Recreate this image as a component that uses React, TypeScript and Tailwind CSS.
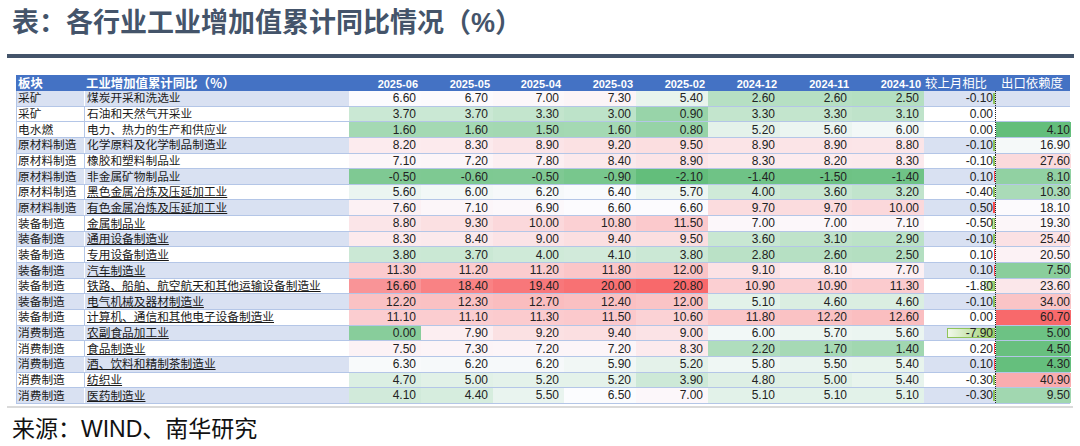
import React from 'react';

type Row = {
  sector: string;
  name: string;
  values: number[];
  mom: number;
  exportDep: number | null;
};

const dates = ['2025-06', '2025-05', '2025-04', '2025-03', '2025-02', '2024-12', '2024-11', '2024-10'];

const rows: Row[] = [
  { sector: '采矿', name: '煤炭开采和洗选业', values: [6.6, 6.7, 7.0, 7.3, 5.4, 2.6, 2.6, 2.5], mom: -0.1, exportDep: null },
  { sector: '采矿', name: '石油和天然气开采业', values: [3.7, 3.7, 3.3, 3.0, 0.9, 3.3, 3.3, 3.1], mom: 0.0, exportDep: null },
  { sector: '电水燃', name: '电力、热力的生产和供应业', values: [1.6, 1.6, 1.5, 1.6, 0.8, 5.2, 5.6, 6.0], mom: 0.0, exportDep: 4.1 },
  { sector: '原材料制造', name: '化学原料及化学制品制造业', values: [8.2, 8.3, 8.9, 9.2, 9.5, 8.9, 8.9, 8.8], mom: -0.1, exportDep: 16.9 },
  { sector: '原材料制造', name: '橡胶和塑料制品业', values: [7.1, 7.2, 7.8, 8.4, 8.9, 8.3, 8.2, 8.3], mom: -0.1, exportDep: 27.6 },
  { sector: '原材料制造', name: '非金属矿物制品业', values: [-0.5, -0.6, -0.5, -0.9, -2.1, -1.4, -1.5, -1.4], mom: 0.1, exportDep: 8.1 },
  { sector: '原材料制造', name: '黑色金属冶炼及压延加工业', values: [5.6, 6.0, 6.2, 6.4, 5.7, 4.0, 3.6, 3.2], mom: -0.4, exportDep: 10.3 },
  { sector: '原材料制造', name: '有色金属冶炼及压延加工业', values: [7.6, 7.1, 6.9, 6.6, 6.6, 9.7, 9.7, 10.0], mom: 0.5, exportDep: 18.1 },
  { sector: '装备制造', name: '金属制品业', values: [8.8, 9.3, 10.0, 10.8, 11.5, 7.0, 7.0, 7.1], mom: -0.5, exportDep: 19.3 },
  { sector: '装备制造', name: '通用设备制造业', values: [8.3, 8.4, 9.0, 9.4, 9.5, 3.6, 3.1, 2.9], mom: -0.1, exportDep: 25.4 },
  { sector: '装备制造', name: '专用设备制造业', values: [3.8, 3.7, 4.0, 4.1, 3.8, 2.8, 2.6, 2.5], mom: 0.1, exportDep: 20.5 },
  { sector: '装备制造', name: '汽车制造业', values: [11.3, 11.2, 11.2, 11.8, 12.0, 9.1, 8.1, 7.7], mom: 0.1, exportDep: 7.5 },
  { sector: '装备制造', name: '铁路、船舶、航空航天和其他运输设备制造业', values: [16.6, 18.4, 19.4, 20.0, 20.8, 10.9, 10.9, 11.3], mom: -1.8, exportDep: 23.6 },
  { sector: '装备制造', name: '电气机械及器材制造业', values: [12.2, 12.3, 12.7, 12.4, 12.0, 5.1, 4.6, 4.6], mom: -0.1, exportDep: 34.0 },
  { sector: '装备制造', name: '计算机、通信和其他电子设备制造业', values: [11.1, 11.1, 11.3, 11.5, 10.6, 11.8, 12.2, 12.6], mom: 0.0, exportDep: 60.7 },
  { sector: '消费制造', name: '农副食品加工业', values: [0.0, 7.9, 9.2, 9.4, 9.0, 6.0, 5.7, 5.6], mom: -7.9, exportDep: 5.0 },
  { sector: '消费制造', name: '食品制造业', values: [7.5, 7.3, 7.2, 7.2, 8.3, 2.2, 1.7, 1.4], mom: 0.2, exportDep: 4.5 },
  { sector: '消费制造', name: '酒、饮料和精制茶制造业', values: [6.3, 6.2, 6.2, 5.9, 5.2, 5.8, 5.5, 5.4], mom: 0.1, exportDep: 4.3 },
  { sector: '消费制造', name: '纺织业', values: [4.7, 5.0, 5.2, 5.2, 3.9, 4.8, 5.0, 5.4], mom: -0.3, exportDep: 40.9 },
  { sector: '消费制造', name: '医药制造业', values: [4.1, 4.4, 5.5, 6.5, 7.0, 5.1, 5.1, 5.1], mom: -0.3, exportDep: 9.5 },
];

// rows drawn with the lavender band (the third row breaks the pattern in the source sheet)
const banded = [true, false, false, true, false, true, false, true, false, true, false, true, false, true, false, true, false, true, false, true];

function median(list: number[]) {
  const s = [...list].sort((a, b) => a - b);
  const r = 0.5 * (s.length - 1);
  const lo = Math.floor(r);
  return s[lo] + (s[Math.min(lo + 1, s.length - 1)] - s[lo]) * (r - lo);
}

function makeScale(list: number[]) {
  const min = Math.min(...list);
  const max = Math.max(...list);
  const mid = median(list);
  const green = [99, 190, 123];
  const white = [252, 252, 255];
  const red = [248, 105, 107];
  return (v: number) => {
    let c: number[];
    if (v <= mid) {
      const t = mid === min ? 0 : (mid - v) / (mid - min);
      c = white.map((w, i) => w + (green[i] - w) * t);
    } else {
      const t = (v - mid) / (max - mid);
      c = white.map((w, i) => w + (red[i] - w) * t);
    }
    return `rgb(${c.map((x) => Math.round(x)).join(',')})`;
  };
}

const valueColor = makeScale(rows.flatMap((r) => r.values));
const exportColor = makeScale(rows.filter((r) => r.exportDep !== null).map((r) => r.exportDep as number));

const fmt = (v: number) => v.toFixed(2);

const cols = 'grid grid-cols-[68px_264px_72px_72px_71px_72px_72px_72px_72px_72px_72px_75px]';

function MomCell({ v }: { v: number }) {
  let bar = null;
  if (v < 0) {
    bar = (
      <div
        className="absolute right-0 top-[2px] bottom-[2px] border border-[#8fc45a] bg-linear-to-r from-[#f1f8ea] to-[#9fd06c]"
        style={{ width: Math.max(1.5, (Math.abs(v) / 7.9) * 48) }}
      />
    );
  } else if (v > 0) {
    bar = (
      <div
        className="absolute right-0 top-[2px] bottom-[2px] bg-[#ff4b4b]"
        style={{ width: Math.max(1, (v / 0.5) * 2.5) }}
      />
    );
  }
  return (
    <div className="relative flex items-center justify-end pr-[2px] text-[12px] text-[#222] border-r border-dotted border-[#222]">
      {bar}
      <span className="relative">{fmt(v)}</span>
    </div>
  );
}

export default function App() {
  return (
    <div className="w-[1080px] h-[446px] overflow-hidden bg-white font-['Liberation_Sans','Noto_Sans_CJK_SC',sans-serif] text-[#1a1a1a]">
      <h1 className="pt-[7px] pl-[12px] text-[27px] leading-[33px] font-bold text-[#44546A]">
        表：各行业工业增加值累计同比情况（%）
      </h1>
      <div className="mt-[14px] ml-[7px] mr-[6px] h-[4px] bg-[#44546A]" />

      {/* TABLE */}
      <div className="mt-[17px] ml-[16px] w-[1054px]">
        <div className={`${cols} h-[16px] bg-[#4472C4] text-white`}>
          <div className="flex items-center pl-[2px] text-[12.4px] font-bold">板块</div>
          <div className="flex items-center pl-[2px] text-[12.4px] font-bold">工业增加值累计同比（％）</div>
          {dates.map((d) => (
            <div key={d} className="flex items-center justify-end pr-[2px] text-[11px] font-bold">
              {d}
            </div>
          ))}
          <div className="flex items-center justify-end pr-[8px] text-[12.4px]">较上月相比</div>
          <div className="flex items-center justify-end pr-[7px] text-[12.4px]">出口依赖度</div>
        </div>

        {rows.map((r, i) => (
          <div
            key={r.name}
            className={`${cols} h-[15.65px] border-b border-l border-[#b4c6e7] leading-none ${
              banded[i] ? 'bg-[#D9E1F2]' : 'bg-white'
            }`}
          >
            <div
              className={`flex items-center pl-[1px] text-[11.7px] border-r ${
                banded[i] ? 'border-white' : 'border-[#b4c6e7]'
              }`}
            >
              {r.sector}
            </div>
            <div className="flex items-center pl-[2px] text-[11.7px]">
              <span className={i >= 6 ? 'underline underline-offset-[1px]' : ''}>{r.name}</span>
            </div>
            {r.values.map((v, j) => (
              <div
                key={j}
                className="flex items-center justify-end pr-[5px] text-[12px] text-[#222]"
                style={{ backgroundColor: valueColor(v) }}
              >
                {fmt(v)}
              </div>
            ))}
            <MomCell v={r.mom} />
            {r.exportDep === null ? (
              <div />
            ) : (
              <div
                className="flex items-center justify-end pr-[1px] text-[12px] text-[#222]"
                style={{ backgroundColor: exportColor(r.exportDep) }}
              >
                {fmt(r.exportDep)}
              </div>
            )}
          </div>
        ))}
      </div>

      <div className="mt-[2px] ml-[7px] w-[1066px] h-[2px] bg-[#dadada]" />
      <p className="mt-[8px] pl-[12px] text-[23px] leading-[26px] text-[#111]">来源：WIND、南华研究</p>
    </div>
  );
}
